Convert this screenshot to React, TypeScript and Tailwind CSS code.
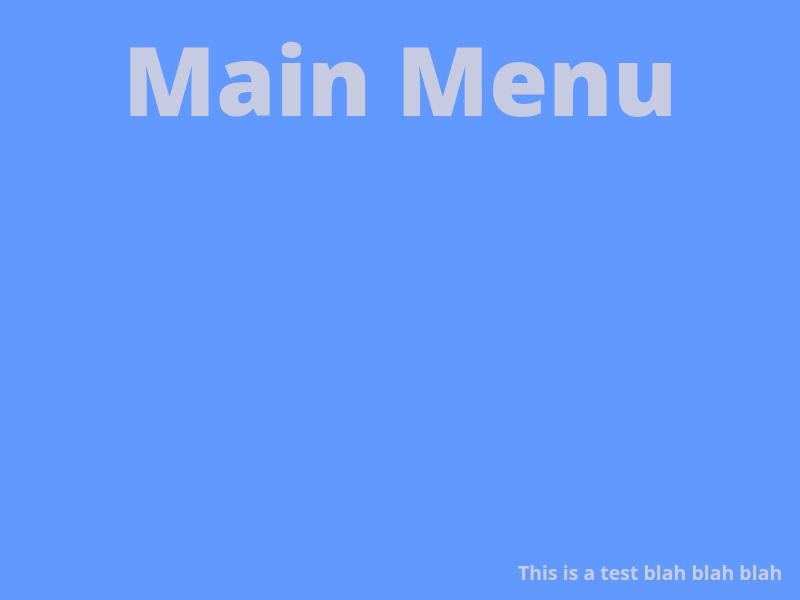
export default function App() {
  return (
    <div className="flex h-[600px] w-[800px] flex-col bg-[#6199ff] text-[#c6cbe2]" style={{ fontFamily: '"Open Sans", sans-serif' }}>
      <h1 className="mt-[19px] text-center text-[96px] font-extrabold leading-[120px]">Main Menu</h1>
      <div className="flex-1" />
      <p className="mb-[13px] pr-[18px] text-right text-[19.5px] font-bold leading-[28px]">This is a test blah blah blah</p>
    </div>
  );
}
